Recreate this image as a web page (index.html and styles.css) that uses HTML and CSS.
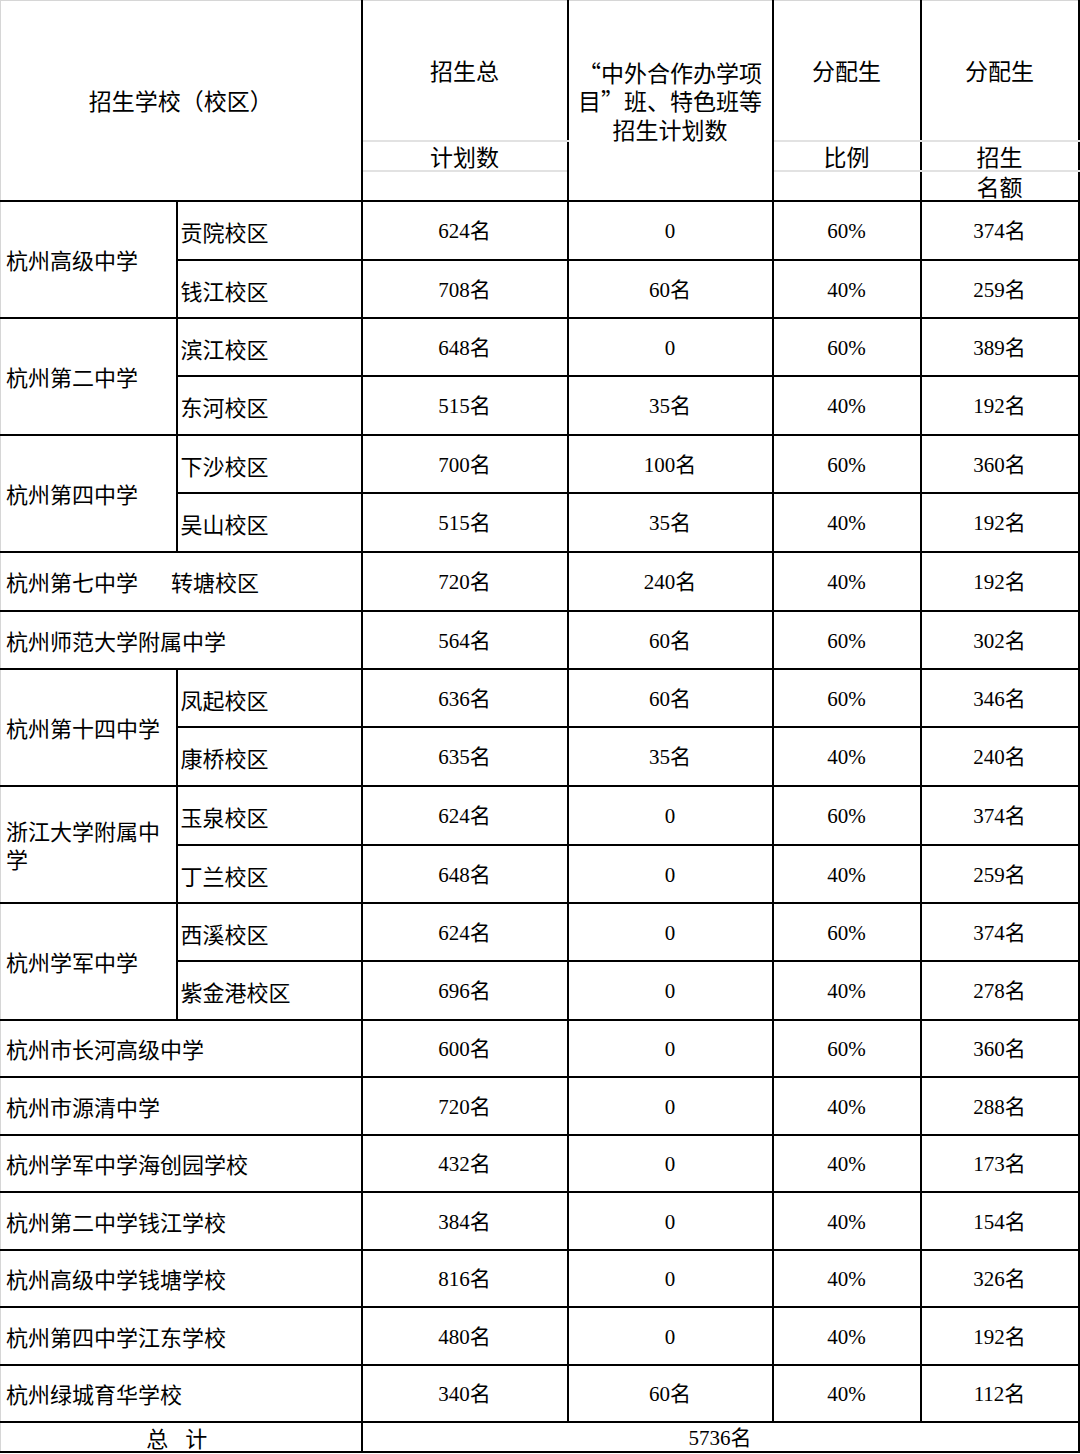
FILE: index.html
```html
<!DOCTYPE html>
<html lang="zh-CN">
<head>
<meta charset="utf-8">
<title>招生计划</title>
<link rel="stylesheet" href="styles.css">
</head>
<body>
<table class="plan">
  <colgroup>
    <col class="c1"><col class="c2"><col class="c3"><col class="c4"><col class="c5"><col class="c6">
  </colgroup>
  <thead>
    <tr class="ha">
      <th class="h first top" colspan="2" rowspan="3">招生学校（校区）</th>
      <th class="h top sub-b">招生总</th>
      <th class="h top multi" rowspan="3">“中外合作办学项<br>目”班、特色班等<br>招生计划数</th>
      <th class="h top sub-b">分配生</th>
      <th class="h top sub-b">分配生</th>
    </tr>
    <tr class="hb">
      <th class="h sub-t sub-b">计划数</th>
      <th class="h sub-t sub-b">比例</th>
      <th class="h sub-t sub-b">招生</th>
    </tr>
    <tr class="hc">
      <th class="h sub-t"></th>
      <th class="h sub-t"></th>
      <th class="h sub-t">名额</th>
    </tr>
  </thead>
  <tbody>
    <tr class="r59">
      <td class="name first" rowspan="2">杭州高级中学</td>
      <td class="campus">贡院校区</td>
      <td class="num">624名</td><td class="num">0</td><td class="num">60%</td><td class="num">374名</td>
    </tr>
    <tr class="r58">
      <td class="campus">钱江校区</td>
      <td class="num">708名</td><td class="num">60名</td><td class="num">40%</td><td class="num">259名</td>
    </tr>
    <tr class="r58">
      <td class="name first" rowspan="2">杭州第二中学</td>
      <td class="campus">滨江校区</td>
      <td class="num">648名</td><td class="num">0</td><td class="num">60%</td><td class="num">389名</td>
    </tr>
    <tr class="r59">
      <td class="campus">东河校区</td>
      <td class="num">515名</td><td class="num">35名</td><td class="num">40%</td><td class="num">192名</td>
    </tr>
    <tr class="r58">
      <td class="name first" rowspan="2">杭州第四中学</td>
      <td class="campus">下沙校区</td>
      <td class="num">700名</td><td class="num">100名</td><td class="num">60%</td><td class="num">360名</td>
    </tr>
    <tr class="r59">
      <td class="campus">吴山校区</td>
      <td class="num">515名</td><td class="num">35名</td><td class="num">40%</td><td class="num">192名</td>
    </tr>
    <tr class="r59">
      <td class="name first" colspan="2">杭州第七中学<span class="gap">转塘校区</span></td>
      <td class="num">720名</td><td class="num">240名</td><td class="num">40%</td><td class="num">192名</td>
    </tr>
    <tr class="r58">
      <td class="name first" colspan="2">杭州师范大学附属中学</td>
      <td class="num">564名</td><td class="num">60名</td><td class="num">60%</td><td class="num">302名</td>
    </tr>
    <tr class="r58">
      <td class="name first" rowspan="2">杭州第十四中学</td>
      <td class="campus">凤起校区</td>
      <td class="num">636名</td><td class="num">60名</td><td class="num">60%</td><td class="num">346名</td>
    </tr>
    <tr class="r59">
      <td class="campus">康桥校区</td>
      <td class="num">635名</td><td class="num">35名</td><td class="num">40%</td><td class="num">240名</td>
    </tr>
    <tr class="r59">
      <td class="name first" rowspan="2">浙江大学附属中学</td>
      <td class="campus">玉泉校区</td>
      <td class="num">624名</td><td class="num">0</td><td class="num">60%</td><td class="num">374名</td>
    </tr>
    <tr class="r58">
      <td class="campus">丁兰校区</td>
      <td class="num">648名</td><td class="num">0</td><td class="num">40%</td><td class="num">259名</td>
    </tr>
    <tr class="r58">
      <td class="name first" rowspan="2">杭州学军中学</td>
      <td class="campus">西溪校区</td>
      <td class="num">624名</td><td class="num">0</td><td class="num">60%</td><td class="num">374名</td>
    </tr>
    <tr class="r59">
      <td class="campus">紫金港校区</td>
      <td class="num">696名</td><td class="num">0</td><td class="num">40%</td><td class="num">278名</td>
    </tr>
    <tr class="r57">
      <td class="name first" colspan="2">杭州市长河高级中学</td>
      <td class="num">600名</td><td class="num">0</td><td class="num">60%</td><td class="num">360名</td>
    </tr>
    <tr class="r58">
      <td class="name first" colspan="2">杭州市源清中学</td>
      <td class="num">720名</td><td class="num">0</td><td class="num">40%</td><td class="num">288名</td>
    </tr>
    <tr class="r57">
      <td class="name first" colspan="2">杭州学军中学海创园学校</td>
      <td class="num">432名</td><td class="num">0</td><td class="num">40%</td><td class="num">173名</td>
    </tr>
    <tr class="r58">
      <td class="name first" colspan="2">杭州第二中学钱江学校</td>
      <td class="num">384名</td><td class="num">0</td><td class="num">40%</td><td class="num">154名</td>
    </tr>
    <tr class="r57">
      <td class="name first" colspan="2">杭州高级中学钱塘学校</td>
      <td class="num">816名</td><td class="num">0</td><td class="num">40%</td><td class="num">326名</td>
    </tr>
    <tr class="r58">
      <td class="name first" colspan="2">杭州第四中学江东学校</td>
      <td class="num">480名</td><td class="num">0</td><td class="num">40%</td><td class="num">192名</td>
    </tr>
    <tr class="r57">
      <td class="name first" colspan="2">杭州绿城育华学校</td>
      <td class="num">340名</td><td class="num">60名</td><td class="num">40%</td><td class="num">112名</td>
    </tr>
  </tbody>
  <tfoot>
    <tr class="total">
      <td class="tlabel first" colspan="2"><span class="tsp">总</span>计</td>
      <td class="num" colspan="4">5736名</td>
    </tr>
  </tfoot>
</table>
</body>
</html>
```

FILE: styles.css
```css
html, body {
  margin: 0;
  padding: 0;
  background: #ffffff;
}

.plan {
  width: 1079px;
  border-collapse: collapse;
  table-layout: fixed;
  color: #000;
}

.c1 { width: 176px; }
.c2 { width: 185px; }
.c3 { width: 206px; }
.c4 { width: 205px; }
.c5 { width: 148px; }
.c6 { width: 158px; }

.plan th,
.plan td {
  border: 2px solid #000;
  padding: 0 4px;
  font-family: "Noto Sans CJK SC", "Noto Sans", sans-serif;
  font-size: 22px;
  font-weight: normal;
  line-height: 28px;
  vertical-align: middle;
}

.plan .first { border-left: 1px solid #d6d6d6; }
.plan .top { border-top: 1px solid #d6d6d6; }

.ha { height: 140px; }
.hb { height: 29px; }
.hc { height: 29px; }

.plan .h {
  text-align: center;
  padding: 0;
  font-size: 23px;
  line-height: 28px;
}

.plan .multi { line-height: 28.5px; }

.plan .sub-b { border-bottom: 2px solid #e2e2e2; }
.plan .sub-t { border-top: 2px solid #e2e2e2; }

.r59 { height: 59px; }
.r58 { height: 58px; }
.r57 { height: 57px; }

.plan .name {
  text-align: left;
  padding-left: 5px;
  padding-right: 4px;
}

.plan .campus {
  text-align: left;
  padding-left: 3px;
  padding-top: 2px;
}

.gap { margin-left: 33px; }

.plan .num {
  font-family: "Liberation Serif", "Noto Sans CJK SC", serif;
  font-size: 21px;
  text-align: center;
  padding-top: 2px;
}

.total { height: 30px; }

.plan .tlabel {
  text-align: center;
  line-height: 26px;
  padding: 0 8px 0 0;
}

.plan .total .num {
  line-height: 26px;
  padding-top: 2px;
}

.tsp { margin-right: 17px; }
```
